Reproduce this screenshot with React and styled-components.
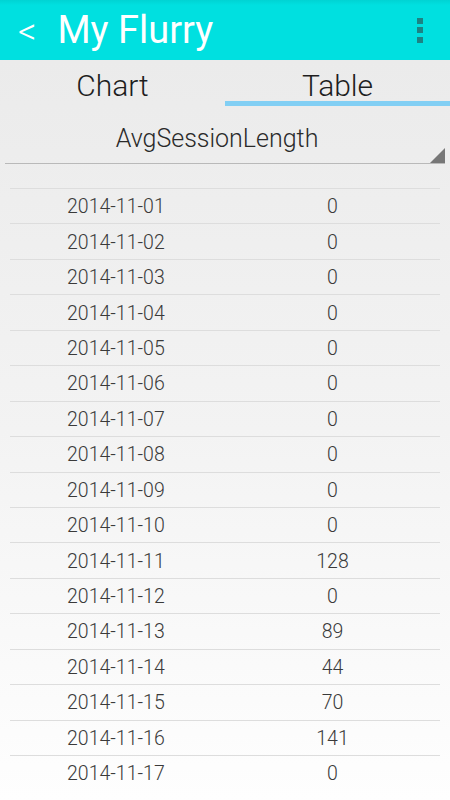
import React, { useState } from 'react';
import styled, { createGlobalStyle } from 'styled-components';

const rows = [
  ['2014-11-01', 0],
  ['2014-11-02', 0],
  ['2014-11-03', 0],
  ['2014-11-04', 0],
  ['2014-11-05', 0],
  ['2014-11-06', 0],
  ['2014-11-07', 0],
  ['2014-11-08', 0],
  ['2014-11-09', 0],
  ['2014-11-10', 0],
  ['2014-11-11', 128],
  ['2014-11-12', 0],
  ['2014-11-13', 89],
  ['2014-11-14', 44],
  ['2014-11-15', 70],
  ['2014-11-16', 141],
  ['2014-11-17', 0],
];

const GlobalStyle = createGlobalStyle`
  html, body {
    margin: 0;
    padding: 0;
    height: 100%;
  }
  body {
    font-family: Roboto, "Noto Sans", "Liberation Sans", sans-serif;
    background: #ffffff;
    overflow: hidden;
  }
`;

const App = () => {
  const [tab, setTab] = useState('table');

  return (
    <Screen>
      <GlobalStyle />
      <ActionBar>
        <Back>&lt;</Back>
        <Title>My Flurry</Title>
        <Overflow>
          <svg width="6" height="25" viewBox="0 0 6 25">
            <rect x="0" y="0" width="6" height="6" fill="#1c8384" />
            <rect x="0" y="9" width="6" height="6" fill="#1c8384" />
            <rect x="0" y="19" width="6" height="6" fill="#1c8384" />
          </svg>
        </Overflow>
      </ActionBar>

      <Body>
        <Tabs>
          <Tab active={tab === 'chart'} onClick={() => setTab('chart')}>Chart</Tab>
          <Tab active={tab === 'table'} onClick={() => setTab('table')}>Table</Tab>
        </Tabs>

        <Spinner>AvgSessionLength</Spinner>

        <DataTable>
          {rows.map(([date, value]) => (
            <Row key={date}>
              <DateCell>{date}</DateCell>
              <ValueCell>{value}</ValueCell>
            </Row>
          ))}
        </DataTable>
      </Body>
    </Screen>
  );
};

const Screen = styled.div`
  width: 450px;
  height: 800px;
  display: flex;
  flex-direction: column;
  overflow: hidden;
`;

const ActionBar = styled.div`
  height: 60px;
  flex-shrink: 0;
  display: flex;
  align-items: center;
  padding-left: 18px;
  background: linear-gradient(#00d3d3 0px, #00e0e0 5px, #00e0e0 100%);
  color: #ffffff;
`;

const Back = styled.span`
  font-size: 36px;
  line-height: 1;
  font-weight: 300;
  margin-right: 21px;
  margin-top: 3px;
`;

const Title = styled.span`
  font-size: 38px;
  line-height: 1;
  font-weight: 400;
`;

const Overflow = styled.div`
  margin-left: auto;
  margin-right: 27px;
  display: flex;
  margin-top: 1px;
`;

const Body = styled.div`
  flex: 1;
  background: linear-gradient(#ebebeb 0%, #f3f3f3 50%, #fefefe 100%);
`;

const Tabs = styled.div`
  display: grid;
  grid-template-columns: 1fr 1fr;
`;

const Tab = styled.div`
  padding-top: 11px;
  font-size: 30px;
  line-height: 30px;
  font-weight: 300;
  color: #1e1e1e;
  text-align: center;
  border-bottom: 5px solid ${props => (props.active ? '#82cff4' : 'transparent')};
  cursor: pointer;
`;

const Spinner = styled.div`
  position: relative;
  margin: 0 5px;
  padding: 20px 16px 12px 0;
  font-size: 25px;
  line-height: 25px;
  font-weight: 300;
  color: #2a2a2a;
  text-align: center;
  border-bottom: 1px solid #b9b9b9;

  &::after {
    content: '';
    position: absolute;
    right: 0;
    bottom: 0;
    width: 0;
    height: 0;
    border-style: solid;
    border-width: 0 0 15px 15px;
    border-color: transparent transparent #777777 transparent;
  }
`;

const DataTable = styled.div`
  margin: 24px 10px 0;
`;

const Row = styled.div`
  box-sizing: border-box;
  height: 35.44px;
  padding-top: 1px;
  display: grid;
  grid-template-columns: 1fr 1fr;
  align-items: center;
  border-top: 1px solid #dddddd;
  font-size: 19.5px;
  font-weight: 300;
  color: #3a3a3a;
`;

const DateCell = styled.div`
  padding-left: 57px;
`;

const ValueCell = styled.div`
  text-align: center;
`;

export default App;
